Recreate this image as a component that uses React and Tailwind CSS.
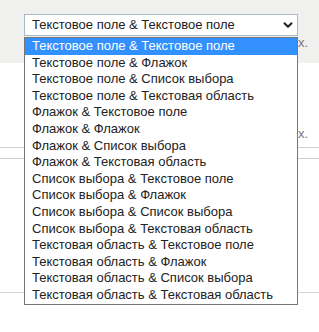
import { ChevronDown } from "lucide-react";

const options = [
    "Текстовое поле & Текстовое поле",
    "Текстовое поле & Флажок",
    "Текстовое поле & Список выбора",
    "Текстовое поле & Текстовая область",
    "Флажок & Текстовое поле",
    "Флажок & Флажок",
    "Флажок & Список выбора",
    "Флажок & Текстовая область",
    "Список выбора & Текстовое поле",
    "Список выбора & Флажок",
    "Список выбора & Список выбора",
    "Список выбора & Текстовая область",
    "Текстовая область & Текстовое поле",
    "Текстовая область & Флажок",
    "Текстовая область & Список выбора",
    "Текстовая область & Текстовая область",
];

const App = () => {
    return (
        <div className="relative w-[319px] h-[332px] overflow-hidden bg-white font-['Liberation_Sans',Arial,sans-serif] text-[13px]">
            {/* page behind the open select */}
            <div className="h-[63px] bg-[#f0f0ee] pt-[14px] pl-[24px]">
                <div className="flex items-center justify-between w-[274px] h-[22px] border border-[#a9b8c6] bg-white pl-[7px] pr-[2px] text-[#222]">
                    <span>{options[0]}</span>
                    <ChevronDown size={14} strokeWidth={3.4} className="text-[#222]" />
                </div>
                <div className="flex justify-end pr-[11px] -mt-[1px] leading-[16px] text-[#777]">x.</div>
            </div>
            <div className="flex justify-end pr-[11px] pt-[63px] leading-[16px] text-[#777]">x.</div>
            <div className="mt-[5px] border-t border-[#cfcfcf]" />
            <div className="mt-[10px] border-t border-[#cfcfcf]" />
            <div className="mt-[133px] border-t border-[#d4d4d4]" />

            {/* open dropdown list */}
            <ul className="absolute left-[24px] top-[37px] w-[274px] border border-[#767676] bg-white text-[#222]">
                {options.map((o, i) => (
                    <li
                        key={o}
                        className={
                            i === 0
                                ? "h-[16.6px] leading-[16.6px] pl-[7px] bg-[#3390ff] text-white"
                                : "h-[16.6px] leading-[16.6px] pl-[7px]"
                        }
                    >
                        {o}
                    </li>
                ))}
            </ul>
        </div>
    );
};

export default App;
